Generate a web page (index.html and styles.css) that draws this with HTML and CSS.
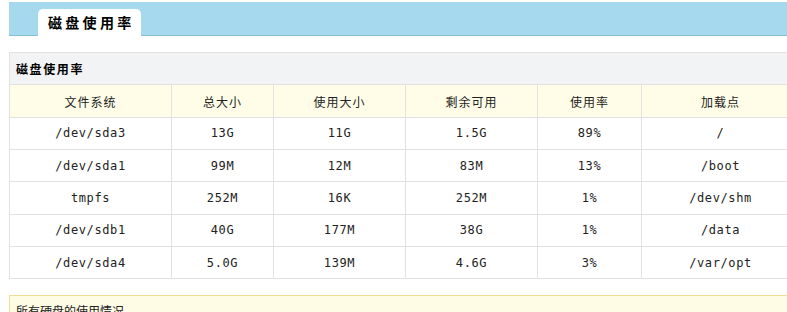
FILE: index.html
```html
<!DOCTYPE html>
<html lang="zh-CN">
<head>
<meta charset="utf-8">
<title>磁盘使用率</title>
<link rel="stylesheet" href="styles.css">
</head>
<body>
<div class="page">
  <div class="tabbar">
    <div class="tab">磁盘使用率</div>
  </div>
  <table class="grid">
    <colgroup>
      <col class="c1"><col class="c2"><col class="c3"><col class="c4"><col class="c5"><col class="c6">
    </colgroup>
    <tr><th class="caption" colspan="6">磁盘使用率</th></tr>
    <tr class="head">
      <td>文件系统</td><td>总大小</td><td>使用大小</td><td>剩余可用</td><td>使用率</td><td>加载点</td>
    </tr>
    <tr><td>/dev/sda3</td><td>13G</td><td>11G</td><td>1.5G</td><td>89%</td><td>/</td></tr>
    <tr><td>/dev/sda1</td><td>99M</td><td>12M</td><td>83M</td><td>13%</td><td>/boot</td></tr>
    <tr><td>tmpfs</td><td>252M</td><td>16K</td><td>252M</td><td>1%</td><td>/dev/shm</td></tr>
    <tr><td>/dev/sdb1</td><td>40G</td><td>177M</td><td>38G</td><td>1%</td><td>/data</td></tr>
    <tr><td>/dev/sda4</td><td>5.0G</td><td>139M</td><td>4.6G</td><td>3%</td><td>/var/opt</td></tr>
  </table>
  <div class="note">所有硬盘的使用情况</div>
</div>
</body>
</html>
```
FILE: styles.css
```css
html, body {
  margin: 0;
  padding: 0;
  background: #ffffff;
  overflow: hidden;
}
.page {
  width: 800px;
  padding: 2px 0 0 9px;
  font-family: "Noto Sans CJK SC", "Liberation Sans", sans-serif;
  font-size: 12px;
  color: #222;
}
.tabbar {
  height: 33px;
  background: #a7d9ee;
  border-bottom: 1px solid #86bfd6;
  display: flex;
  align-items: flex-end;
}
.tab {
  margin-left: 29px;
  width: 103px;
  height: 27px;
  background: #ffffff;
  border-radius: 5px 5px 0 0;
  margin-bottom: -1px;
  box-sizing: border-box;
  padding-left: 10px;
  font-size: 14px;
  font-weight: bold;
  letter-spacing: 3.3px;
  line-height: 27px;
  color: #000;
}
.grid {
  margin-top: 16px;
  width: 790px;
  border-collapse: collapse;
  table-layout: fixed;
}
.grid th, .grid td {
  border: 1px solid #e2e2e2;
  height: 31.35px;
  padding: 0;
  text-align: center;
  vertical-align: middle;
  font-family: "DejaVu Sans Mono", "Liberation Mono", monospace;
  font-size: 12px;
  color: #222;
  letter-spacing: 0.6px;
}
.grid th.caption {
  background: #f2f3f5;
  text-align: left;
  padding-left: 6px;
  font-family: "Noto Sans CJK SC", sans-serif;
  font-weight: bold;
  font-size: 12px;
  letter-spacing: 1.6px;
  color: #000;
}
.grid tr.head td {
  background: #fffde8;
  font-family: "Noto Sans CJK SC", sans-serif;
  font-size: 12px;
  letter-spacing: 1px;
  color: #222;
}
.c1 { width: 162px; }
.c2 { width: 102px; }
.c3 { width: 132px; }
.c4 { width: 132px; }
.c5 { width: 104px; }
.c6 { width: 158px; }
.note {
  margin-top: 16px;
  width: 790px;
  height: 40px;
  box-sizing: border-box;
  border: 1px solid #efdc95;
  background: #fffce6;
  padding: 6px 0 0 6px;
  font-size: 12px;
  color: #222;
}
```
